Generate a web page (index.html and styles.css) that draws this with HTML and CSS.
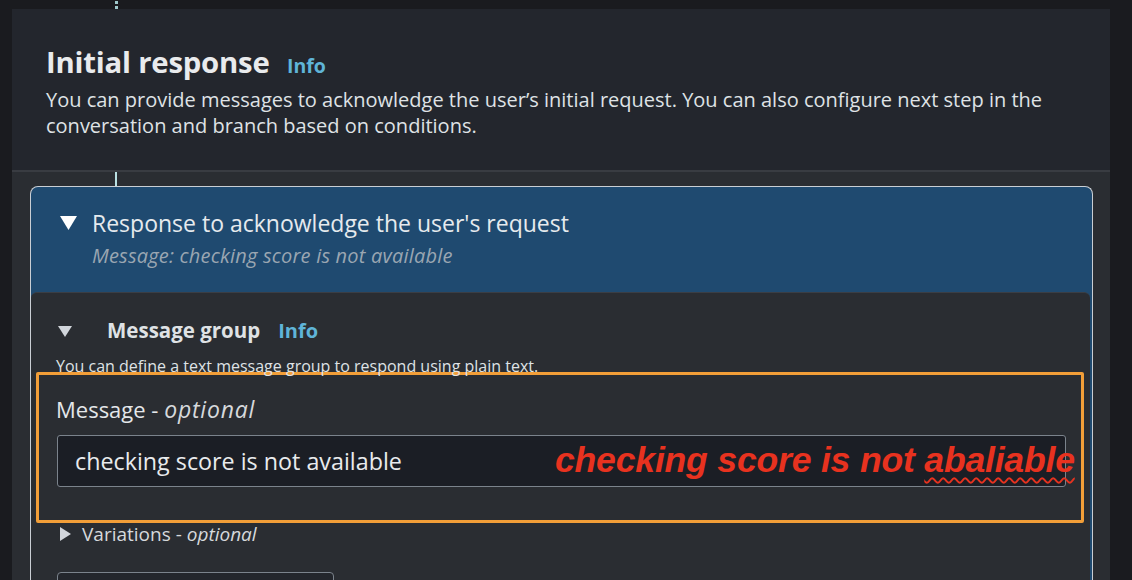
FILE: index.html
```html
<!DOCTYPE html>
<html>
<head>
<meta charset="utf-8">
<link rel="stylesheet" href="styles.css">
</head>
<body>
<div class="top-strip"><span class="dots"></span></div>
<div class="panel">
  <div class="panel-head">
    <h1 class="title">Initial response <span class="info">Info</span></h1>
    <p class="desc">You can provide messages to acknowledge the user’s initial request. You can also configure next step in the conversation and branch based on conditions.</p>
  </div>
  <div class="connector"></div>
  <div class="card">
    <div class="card-head">
      <div class="card-title-row">
        <svg class="tri-down" width="17" height="14" viewBox="0 0 17 14"><path d="M0 0 H17 L8.5 14 Z" fill="#ffffff"/></svg>
        <span class="card-title">Response to acknowledge the user's request</span>
      </div>
      <div class="card-sub">Message: checking score is not available</div>
    </div>
    <div class="inner">
      <div class="group-row">
        <svg class="tri-small" width="14" height="11" viewBox="0 0 14 11"><path d="M0 0 H14 L7 11 Z" fill="#d1d5db"/></svg>
        <span class="group-title">Message group</span>
        <span class="group-info">Info</span>
      </div>
      <div class="group-desc">You can define a text message group to respond using plain text.</div>
      <div class="highlight">
        <div class="field-label">Message - <i>optional</i></div>
        <div class="input">checking score is not available
          <span class="annot">checking score is not <span class="typo">abaliable</span></span>
        </div>
      </div>
      <div class="variations">
        <svg class="tri-right" width="11" height="14" viewBox="0 0 11 14"><path d="M0 0 L11 7 L0 14 Z" fill="#d1d5db"/></svg>
        <span>Variations - <i>optional</i></span>
      </div>
      <div class="bottom-box"></div>
    </div>
  </div>
</div>
</body>
</html>
```
FILE: styles.css
```css
* { box-sizing: border-box; }
html, body { margin: 0; padding: 0; }
body {
  background: #1a1b1f;
  font-family: "Open Sans", "Noto Sans", sans-serif;
  color: #e9ebed;
  width: 1132px;
  height: 580px;
  overflow: hidden;
}
.top-strip {
  height: 9px;
  position: relative;
}
.dots {
  position: absolute;
  left: 115px;
  top: 1px;
  width: 3px;
  height: 8px;
  background: repeating-linear-gradient(to bottom, #9fc9cc 0 3px, transparent 3px 5px);
}
.panel {
  margin-left: 12px;
  width: 1098px;
  height: 571px;
  background: #2a2d32;
  overflow: hidden;
}
.panel-head {
  background: #23262d;
  height: 163px;
  padding: 33px 0 0 34px;
  border-bottom: 2px solid #393c42;
}
.title {
  margin: 0;
  font-size: 29.3px;
  font-weight: 700;
  line-height: 40px;
  color: #e9ebed;
  letter-spacing: -0.2px;
}
.info {
  font-size: 19.5px;
  color: #5fb4d8;
  margin-left: 10px;
  font-weight: 700;
  letter-spacing: 0;
}
.desc {
  margin: 1px 0 0 0;
  font-size: 20px;
  line-height: 26px;
  color: #dfe2e5;
  width: 1020px;
}
.connector {
  margin-left: 103px;
  width: 2px;
  height: 14px;
  background: #b9e0e3;
}
.card {
  margin-left: 18px;
  width: 1063px;
  height: 400px;
  background: #1f4a70;
  border: 1px solid #c9ced4;
  border-bottom: none;
  border-radius: 8px 8px 0 0;
}
.card-head {
  height: 105px;
  padding: 20px 0 0 29px;
}
.card-title-row {
  display: flex;
  align-items: center;
  gap: 15px;
  height: 32px;
}
.card-title {
  font-size: 23px;
  color: #e6eaee;
}
.card-sub {
  margin-left: 32px;
  margin-top: 2px;
  font-size: 20px;
  font-style: italic;
  color: #9aa6b2;
  line-height: 30px;
  letter-spacing: 0.2px;
}
.inner {
  margin-right: 2px;
  height: 300px;
  background: #2a2d32;
  border-top: 1px solid #3a3e45;
  border-radius: 6px 6px 0 0;
  padding-top: 23px;
}
.group-row {
  display: flex;
  align-items: center;
  height: 28px;
  padding-left: 27px;
}
.tri-small { margin-top: 2px; }
.group-title {
  margin-left: 35px;
  font-size: 20.5px;
  font-weight: 700;
  color: #dfe2e5;
}
.group-info {
  margin-left: 18px;
  font-size: 20px;
  font-weight: 700;
  color: #5fb4d8;
}
.group-desc {
  margin-top: 12px;
  padding-left: 25px;
  font-size: 16px;
  line-height: 20px;
  color: #dfe2e5;
  height: 16px;
  overflow: visible;
}
.highlight {
  margin-left: 5px;
  width: 1048px;
  height: 151px;
  border: 3px solid #f29e38;
  border-radius: 2px;
  padding: 19px 0 0 17px;
}
.field-label {
  font-size: 22px;
  line-height: 30px;
  color: #e4e7ea;
}
.field-label i { color: #d6d9dc; font-size: 23px; letter-spacing: 0.8px; }
.input {
  position: relative;
  margin-top: 11px;
  margin-left: 1px;
  width: 1009px;
  height: 52px;
  background: #1b1e25;
  border: 1px solid #7b838c;
  border-radius: 3px;
  padding-left: 17px;
  font-size: 23.3px;
  line-height: 50px;
  color: #e9ebed;
}
.annot {
  position: absolute;
  left: 497px;
  top: 4px;
  font-family: "Liberation Sans", Arial, sans-serif;
  font-weight: 700;
  font-style: italic;
  font-size: 35.6px;
  line-height: 40px;
  color: #e8321f;
  white-space: nowrap;
  letter-spacing: -0.2px;
}
.typo {
  text-decoration-line: underline;
  text-decoration-style: wavy;
  text-decoration-color: #e8321f;
  text-decoration-thickness: 2px;
  text-underline-offset: 5px;
}
.variations {
  display: flex;
  align-items: center;
  gap: 11px;
  padding-left: 29px;
  height: 24px;
  margin-top: -1px;
  font-size: 19px;
  color: #d6d9dc;
}
.variations i { color: #d6d9dc; }
.bottom-box {
  margin-top: 26px;
  margin-left: 26px;
  width: 277px;
  height: 40px;
  border: 1px solid #7b838c;
  border-radius: 4px;
  background: #23262c;
}
```
